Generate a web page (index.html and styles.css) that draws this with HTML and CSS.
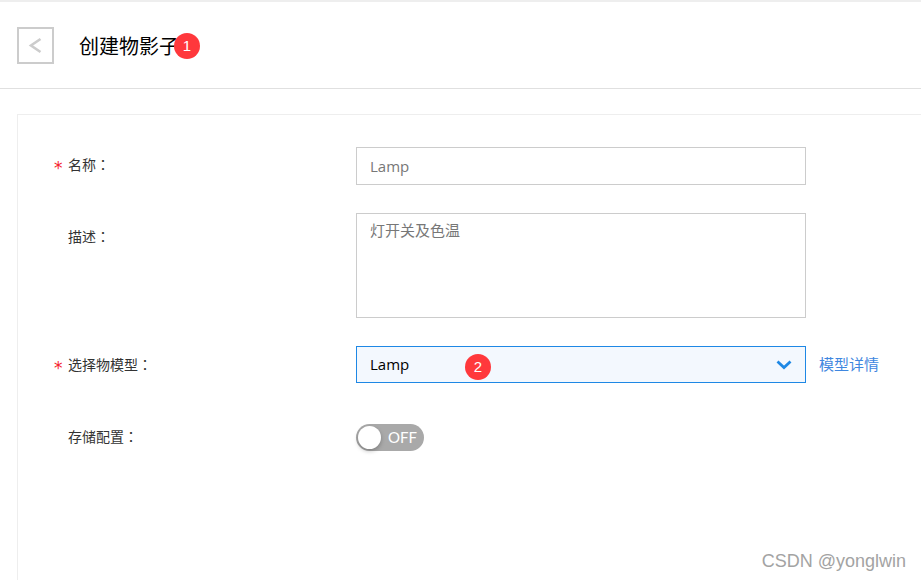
FILE: index.html
```html
<!DOCTYPE html>
<html lang="zh">
<head>
<meta charset="utf-8">
<title>创建物影子</title>
<link rel="stylesheet" href="styles.css">
</head>
<body>
<header class="header">
  <button class="back" aria-label="返回">
    <svg width="15" height="17" viewBox="0 0 15 17"><path d="M12.5 2 3 8.5 12.5 15" fill="none" stroke="#ccc" stroke-width="2.6"/></svg>
  </button>
  <h1 class="title">创建物影子<span class="badge badge-title">1</span></h1>
</header>
<main class="card">
  <div class="row row-name">
    <label class="label required">名称<span class="colon" lang="zh-TW">：</span></label>
    <div class="input">Lamp</div>
  </div>
  <div class="row row-desc">
    <label class="label">描述<span class="colon" lang="zh-TW">：</span></label>
    <div class="textarea">灯开关及色温</div>
  </div>
  <div class="row row-model">
    <label class="label required">选择物模型<span class="colon" lang="zh-TW">：</span></label>
    <div class="select">
      Lamp
      <span class="badge badge-select">2</span>
      <svg class="chevron" width="16" height="10" viewBox="0 0 16 10"><path d="M1.5 1.5 8 7.5 14.5 1.5" fill="none" stroke="#1e88e5" stroke-width="2.8"/></svg>
    </div>
    <a class="link">模型详情</a>
  </div>
  <div class="row row-store">
    <label class="label">存储配置<span class="colon" lang="zh-TW">：</span></label>
    <div class="switch"><span class="knob"></span><span class="switch-text">OFF</span></div>
  </div>
</main>
<div class="watermark">CSDN @yonglwin</div>
</body>
</html>
```
FILE: styles.css
```css
* { box-sizing: border-box; }
html, body { margin: 0; height: 100%; overflow: hidden; }
body {
  position: relative;
  background: #fff;
  font-family: "Noto Sans CJK SC", "Liberation Sans", sans-serif;
  border-top: 2px solid #eee;
  color: #333;
}
.header {
  height: 87px;
  display: flex;
  align-items: center;
  padding: 1px 0 0 17px;
  border-bottom: 1px solid #e0e0e0;
}
.back {
  width: 37px;
  height: 37px;
  padding: 0;
  background: #fff;
  border: 2px solid #ccc;
  display: flex;
  align-items: center;
  justify-content: center;
}
.title {
  position: relative;
  margin: 0 0 0 25px;
  font-size: 20px;
  font-weight: 400;
  color: #000;
  line-height: 28px;
}
.badge {
  position: absolute;
  width: 26px;
  height: 26px;
  border-radius: 50%;
  background: #ff383c;
  color: #fff;
  font: 15px/26px "Liberation Sans", sans-serif;
  text-align: center;
}
.badge-title { left: 95px; top: 1px; }
.badge-select { left: 108px; top: 7px; }
.card {
  margin: 25px 0 0 17px;
  height: 480px;
  border: 1px solid #eee;
  border-right: 0;
  padding-top: 32px;
}
.row { display: flex; align-items: flex-start; padding-left: 50px; }
.row-desc { margin-top: 28px; }
.row-model { margin-top: 28px; align-items: center; }
.row-store { margin-top: 36px; align-items: center; }
.label {
  position: relative;
  width: 288px;
  font-size: 14px;
  line-height: 34px;
  padding-bottom: 2px;
  color: #333;
  flex: none;
}
.colon { font-family: "Noto Sans CJK TC", sans-serif; }
.required::before {
  content: "*";
  position: absolute;
  left: -14px;
  top: 3px;
  color: #f5222d;
  font: 17px/36px "DejaVu Sans", sans-serif;
}
.input, .textarea, .select {
  width: 450px;
  flex: none;
  border: 1px solid #ccc;
  padding-left: 13px;
}
.input {
  height: 38px;
  line-height: 36px;
  color: #777;
  font-size: 15px;
  font-family: "Open Sans", "Noto Sans CJK SC", sans-serif;
}
.textarea {
  height: 105px;
  font-size: 15px;
  line-height: 20px;
  padding-top: 6px;
  color: #777;
}
.select {
  position: relative;
  height: 37px;
  line-height: 35px;
  border-color: #1e88e5;
  background: #f3f8fe;
  color: #000;
  font-family: "Open Sans", "Noto Sans CJK SC", sans-serif;
  font-size: 15px;
}
.chevron { position: absolute; right: 13px; top: 13px; }
.link { margin-left: 13px; padding-bottom: 2px; font-size: 15px; color: #3f87e0; line-height: 34px; }
.row-desc .label { margin-top: 6px; }
.switch {
  position: relative;
  width: 68px;
  height: 27px;
  border-radius: 14px;
  background: #a9a9a9;
  color: #fff;
  font: 15px/27px "Lato", sans-serif;
  padding-left: 32px;
}
.knob {
  position: absolute;
  left: 2px;
  top: 2px;
  width: 23px;
  height: 23px;
  border-radius: 50%;
  background: #fff;
  box-shadow: 0 2px 4px rgba(0,0,0,.25);
}
.watermark {
  position: absolute;
  right: 15px;
  top: 548px;
  font: 18px/22px "Liberation Sans", sans-serif;
  color: #a3a3a3;
}
```
